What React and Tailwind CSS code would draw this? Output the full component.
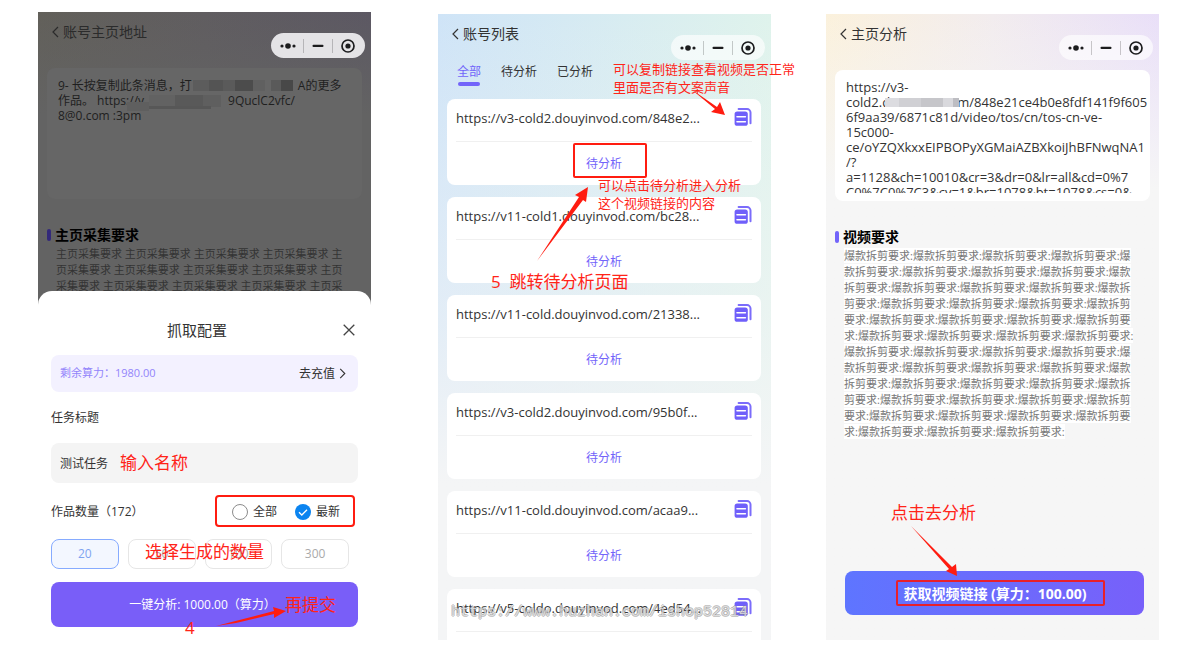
import React from "react";

const LINKS = [
  "https://v3-cold2.douyinvod.com/848e2...",
  "https://v11-cold1.douyinvod.com/bc28...",
  "https://v11-cold.douyinvod.com/21338...",
  "https://v3-cold2.douyinvod.com/95b0f...",
  "https://v11-cold.douyinvod.com/acaa9...",
  "https://v5-coldo.douyinvod.com/4ed54...",
];

const SHARE_TEXT =
  "9- 长按复制此条消息，打\u2003\u2003\u2003\u2003\u2003\u2003\u2003\u2003\u2002\u2004A的更多\n作品。 https://v\u2003\u2003\u2003\u2003\u2003\u2002\u2002、9QuclC2vfc/\n8@0.com :3pm";

const VIDEO_URL =
  "https://v3-\ncold2.d\u2003\u2003\u2003\u2003\u2003\u2006m/848e21ce4b0e8fdf141f9f605\n6f9aa39/6871c81d/video/tos/cn/tos-cn-ve-\n15c000-\nce/oYZQXkxxEIPBOPyXGMaiAZBXkoiJhBFNwqNA1\n/?\na=1128&ch=10010&cr=3&dr=0&lr=all&cd=0%7\nC0%7C0%7C3&cv=1&br=1078&bt=1078&cs=0&";

function Chevron({ flip = false, className = "" }) {
  return (
    <svg viewBox="0 0 7 12" className={className} fill="none" stroke="currentColor" strokeWidth="1.2" aria-hidden="true">
      <path d={flip ? "M1 1l5 5-5 5" : "M6 1L1 6l5 5"} />
    </svg>
  );
}

function Capsule({ tone }) {
  return (
    <div className={`mt-[21px] flex h-[25px] w-[94px] items-center rounded-full px-[3px] text-[#1c1c1e] ${tone}`}>
      <button aria-label="更多" className="flex h-[14px] flex-1 items-center justify-center">
        <svg viewBox="0 0 16 6" className="h-[6px] w-4" fill="currentColor" aria-hidden="true">
          <circle cx="2" cy="3" r="1.6" />
          <circle cx="8" cy="3" r="2.8" />
          <circle cx="14" cy="3" r="1.6" />
        </svg>
      </button>
      <button aria-label="最小化" className="flex h-[14px] flex-1 items-center justify-center border-l border-black/20">
        <svg viewBox="0 0 12 4" className="h-1 w-3" aria-hidden="true">
          <rect x="0.5" y="0.7" width="11" height="2.4" rx="1" fill="currentColor" />
        </svg>
      </button>
      <button aria-label="关闭" className="flex h-[14px] flex-1 items-center justify-center border-l border-black/20">
        <svg viewBox="0 0 14 14" className="size-[14px]" fill="none" aria-hidden="true">
          <circle cx="7" cy="7" r="6" stroke="currentColor" strokeWidth="1.7" />
          <circle cx="7" cy="7" r="2.6" fill="currentColor" />
        </svg>
      </button>
    </div>
  );
}

function Header({ title, tone, className }) {
  return (
    <header className={`flex shrink-0 items-start justify-between pl-[14px] pr-[6px] ${className}`}>
      <a href="#back" className="mt-[10px] flex items-center gap-1 text-[14px] leading-5">
        <Chevron className="h-3 w-[7px]" />
        <h1>{title}</h1>
      </a>
      <Capsule tone={tone} />
    </header>
  );
}

function CopyIcon() {
  return (
    <svg viewBox="0 0 18 20" className="h-5 w-[18px]" fill="none" aria-hidden="true">
      <path d="M4.6 2.1h8.4a3.5 3.5 0 0 1 3.5 3.5v10.6" stroke="#7b6cfb" strokeWidth="2" strokeLinecap="round" />
      <rect x="0.6" y="4.4" width="13.2" height="14.4" rx="2.6" fill="#6f5ffa" />
      <path d="M3 9.8h8.4M3 14.8h8.4" stroke="#fff" strokeWidth="1.6" strokeLinecap="round" />
    </svg>
  );
}

function Note({ className, children }) {
  return <p className={`pointer-events-none absolute whitespace-nowrap text-[#ff2419] ${className}`}>{children}</p>;
}

function Arrow({ className, box, d }) {
  return (
    <svg viewBox={box} className={`pointer-events-none absolute ${className}`} aria-hidden="true">
      <path d={d} fill="#ff1c10" />
    </svg>
  );
}

function SectionTitle({ bar, children }) {
  return (
    <h2 className="flex items-center gap-1 text-[14px] leading-5 font-bold text-black">
      <span className={`h-3 w-1 rounded-full ${bar}`} />
      {children}
    </h2>
  );
}

function CapturePhone() {
  return (
    <section className="relative min-w-0 flex-1">
      <div className="flex h-[294px] flex-col overflow-hidden bg-[#636363] bg-linear-to-r from-[#62605a] via-[#605d60] to-[#5c5863] text-[#2b2b2b]">
        <div className="flex min-h-0 flex-1 flex-col bg-linear-to-b from-[#636363]/0 to-[#636363] to-35%">
          <Header title="账号主页地址" tone="bg-[#e4e3e6]" className="h-14" />
          <div className="relative mx-[9px] shrink-0">
            <textarea
              aria-label="账号主页地址"
              readOnly
              value={SHARE_TEXT}
              className="block h-[131px] w-full resize-none overflow-hidden rounded-lg bg-[#666] px-[11px] py-[10px] text-[12px] leading-[15px] whitespace-pre text-[#1f1f1f] outline-none"
            />
            <svg viewBox="0 0 220 44" className="pointer-events-none absolute top-[10px] left-[80px] h-11 w-[220px]" aria-hidden="true">
              <rect x="66" y="2" width="16" height="11" fill="#5c5c5c" />
              <rect x="82" y="2" width="14" height="11" fill="#545454" />
              <rect x="96" y="2" width="12" height="11" fill="#5a5a5a" />
              <rect x="108" y="2" width="18" height="11" fill="#4c4c4c" />
              <rect x="126" y="2" width="12" height="11" fill="#606060" />
              <rect x="144" y="2" width="10" height="11" fill="#5a5a5a" />
              <rect x="154" y="2" width="12" height="11" fill="#484848" />
              <rect x="22" y="17" width="26" height="12" fill="#626262" />
              <rect x="48" y="17" width="28" height="12" fill="#595959" />
              <rect x="76" y="17" width="18" height="12" fill="#5f5f5f" />
              <rect x="0" y="24" width="22" height="9" fill="#5f5f5f" />
              <rect x="22" y="28" width="62" height="3" fill="#575757" />
            </svg>
          </div>
          <div className="mt-[26px] pr-[18px] pl-[9px]">
            <SectionTitle bar="bg-[#33297a]">主页采集要求</SectionTitle>
            <p className="mt-px pl-[9px] text-[11px] leading-4 text-[#333]">
              {Array(13).fill("主页采集要求").join(" ")}
            </p>
          </div>
        </div>
      </div>

      <form className="relative -mt-[15px] rounded-t-[14px] bg-white px-[13px] pt-[29px] text-[12px] text-[#333]">
        <div className="flex items-center">
          <h2 className="flex-1 text-center text-[15px] leading-5">抓取配置</h2>
          <button type="button" aria-label="关闭" className="mr-[3px] text-[#444]">
            <svg viewBox="0 0 12 12" className="size-3" fill="none" stroke="currentColor" strokeWidth="1.3" aria-hidden="true">
              <path d="M0.7 0.7l10.6 10.6M11.3 0.7L0.7 11.3" />
            </svg>
          </button>
        </div>
        <div className="mt-[15px] flex h-[37px] items-center justify-between rounded-lg bg-[#f3f1ff] pr-3 pl-[9px]">
          <span className="text-[11px] text-[#9284fb]">剩余算力：1980.00</span>
          <a href="#recharge" className="flex items-center gap-1">
            去充值
            <Chevron flip className="h-[11px] w-[7px]" />
          </a>
        </div>
        <label htmlFor="task" className="mt-4 block leading-5">
          任务标题
        </label>
        <input
          id="task"
          defaultValue="测试任务"
          className="mt-[15px] block h-10 w-full rounded-lg bg-[#f4f4f4] px-[9px] outline-none"
        />
        <fieldset className="mt-[19px] flex h-5 items-center">
          <legend className="float-left flex-1 leading-5">作品数量（172）</legend>
          <label className="flex items-center gap-[5px]">
            <input type="radio" name="range" className="size-4 appearance-none rounded-full border border-[#8c8c8c] bg-white" />
            全部
          </label>
          <label className="mr-[18px] ml-[18px] flex items-center gap-[5px]">
            <span className="relative flex">
              <input type="radio" name="range" defaultChecked className="size-4 appearance-none rounded-full bg-[#0b84f0]" />
              <svg viewBox="0 0 16 16" className="pointer-events-none absolute inset-0 size-4" fill="none" stroke="#fff" strokeWidth="1.3" aria-hidden="true">
                <path d="M4 8.2l2.8 2.8L12 5.8" />
              </svg>
            </span>
            最新
          </label>
        </fieldset>
        <div className="mt-[17px] mr-[9px] grid grid-cols-4 gap-[9px]">
          <button type="button" className="h-[30px] rounded-lg border border-[#86abff] bg-[#f3f7ff] text-[#7fa3f0]">20</button>
          <button type="button" className="h-[30px] rounded-lg border border-[#e6e6e6] text-[#aaa]">50</button>
          <button type="button" className="h-[30px] rounded-lg border border-[#e6e6e6] text-[#aaa]">100</button>
          <button type="button" className="h-[30px] rounded-lg border border-[#e6e6e6] text-[#aaa]">300</button>
        </div>
        <button type="button" className="mt-[13px] block h-[45px] w-full rounded-lg bg-[#795ef8] pr-1 text-white">
          一键分析: 1000.00（算力）
        </button>
      </form>

      <div className="pointer-events-none absolute top-[483px] left-[177px] h-8 w-[140px] rounded-sm border-2 border-[#ff1c10]" />
      <Note className="top-[439px] left-[82px] text-[17px] leading-6">输入名称</Note>
      <Note className="top-[528px] left-[107px] text-[17px] leading-6">选择生成的数量</Note>
      <Note className="top-[581px] left-[247px] text-[17px] leading-6">再提交</Note>
      <Note className="top-[604px] left-[147px] text-[17px] leading-6">4</Note>
      <Arrow className="top-[592px] left-[174px] h-6 w-[76px]" box="0 0 76 24" d="M4 22L62 7l-1-4 13 4-12 7V10L24 19z" />
    </section>
  );
}

function ListPhone() {
  return (
    <section className="relative mt-[2px] ml-3 min-w-0 flex-1">
      <div className="h-full bg-linear-to-r from-[#cfe4f7] to-[#dff3ec]">
        <div className="flex h-full flex-col overflow-hidden bg-linear-to-b from-[#f4f5f6]/0 via-[#f4f5f6]/55 to-[#f4f5f6] to-75% text-[#333]">
          <Header title="账号列表" tone="bg-white/65" className="h-[49px]" />
          <nav className="flex shrink-0 gap-5 pl-[19px] text-[12px] leading-[18px]">
            <button className="flex h-9 flex-col items-center gap-px text-[#7264fa]">
              全部
              <span className="h-1 w-[22px] rounded-full bg-[#7264fa]" />
            </button>
            <button className="h-[18px]">待分析</button>
            <button className="h-[18px]">已分析</button>
          </nav>
          <ul className="flex flex-col gap-3 pr-[10px] pl-[9px]">
            {LINKS.map((link) => (
              <li key={link} className="h-[86px] shrink-0 rounded-lg bg-white px-[9px]">
                <div className="flex h-[43px] items-start justify-between border-b border-[#f0f0f0]">
                  <a href="#video" className="mt-[9px] truncate text-[13px] leading-5">{link}</a>
                  <button aria-label="复制链接" className="mt-2 shrink-0">
                    <CopyIcon />
                  </button>
                </div>
                <button className="block h-11 w-full text-center text-[12px] text-[#7264fa]">待分析</button>
              </li>
            ))}
          </ul>
        </div>
      </div>

      <Note className="top-[46px] left-[175px] text-[13px] leading-[18px]">
        可以复制链接查看视频是否正常
        <br />
        里面是否有文案声音
      </Note>
      <Arrow className="top-[74px] left-[252px] h-7 w-9" box="0 0 36 28" d="M1 1L27 19l3-5 5 13-14-3 4-3z" />
      <div className="pointer-events-none absolute top-[129px] left-[135px] h-[35px] w-[74px] rounded-xs border-2 border-[#ff1c10]" />
      <Note className="top-[162px] left-[160px] text-[13px] leading-[18px]">
        可以点击待分析进入分析
        <br />
        这个视频链接的内容
      </Note>
      <Arrow className="top-[172px] left-[98px] h-[76px] w-[54px]" box="0 0 54 76" d="M1 75L43 11l-4-2L52 1l-2 15-3-2z" />
      <Note className="top-[256px] left-[53px] text-[17px] leading-6 whitespace-pre">{"5  跳转待分析页面"}</Note>
      <p className="pointer-events-none absolute top-[589px] left-[13px] font-[Liberation_Mono,monospace] text-[15px] leading-5 whitespace-nowrap text-white/60 [text-shadow:1px_0_#8887,-1px_0_#8887,0_1px_#8887,0_-1px_#8887]">
        https://www.huzhan.com/ishop52814
      </p>
    </section>
  );
}

function AnalysisPhone() {
  return (
    <section className="relative mt-[2px] min-w-0 flex-1 bg-linear-to-r from-[#fbf1dc] via-[#f2ecee] to-[#e9dff8]">
      <div className="flex h-full flex-col bg-linear-to-b from-[#f6f6f6]/0 to-[#f6f6f6] to-28% text-[#333]">
        <Header title="主页分析" tone="bg-white/65" className="h-14" />
        <div className="relative mx-[9px] shrink-0 rounded-lg bg-white pt-[10px] pb-2 pl-[11px]">
          <textarea
            aria-label="视频链接"
            readOnly
            value={VIDEO_URL}
            className="block h-[113px] w-full resize-none overflow-hidden text-[13px] leading-[15px] whitespace-pre outline-none"
          />
          <svg viewBox="0 0 80 10" className="pointer-events-none absolute top-7 left-[50px] h-[10px] w-20" aria-hidden="true">
            <rect width="14" height="9" fill="#dcdce0" />
            <rect x="14" width="22" height="9" fill="#d0d0d4" />
            <rect x="36" width="22" height="9" fill="#c6c6ca" />
            <rect x="58" width="10" height="9" fill="#d9d9dd" />
            <rect x="68" width="6" height="9" fill="#bdbdc2" />
          </svg>
        </div>
        <div className="mt-[26px] pr-[18px] pl-[9px]">
          <SectionTitle bar="bg-[#7264fa]">视频要求</SectionTitle>
          <p className="mt-px pl-[9px] text-[11px] leading-4 break-all text-[#777]">
            <span className="bg-white">{"爆款拆剪要求:".repeat(49)}</span>
          </p>
        </div>
        <button className="mt-auto mr-[15px] mb-[25px] ml-[19px] flex h-11 items-center justify-center rounded-lg bg-linear-to-r from-[#5e75ff] to-[#7760fa] pl-3 text-[14px] font-bold text-white">
          <span className="flex h-[26px] items-center rounded-xs border-2 border-[#e8202a] pr-4 pl-[5px]">
            获取视频链接 (算力：100.00)
          </span>
        </button>
      </div>
      <Note className="top-[487px] left-[65px] text-[17px] leading-6">点击去分析</Note>
      <Arrow className="top-[511px] left-[84px] h-[52px] w-12" box="0 0 48 52" d="M1 1L42 42l4-3 1 12-11-5 3-2z" />
    </section>
  );
}

export default function App() {
  return (
    <main
      lang="zh-CN"
      className="flex h-screen gap-[55px] overflow-hidden bg-white pt-3 pr-[41px] pb-[11px] pl-[38px] font-['Open_Sans','Noto_Sans_CJK_SC',sans-serif]"
    >
      <CapturePhone />
      <ListPhone />
      <AnalysisPhone />
    </main>
  );
}
